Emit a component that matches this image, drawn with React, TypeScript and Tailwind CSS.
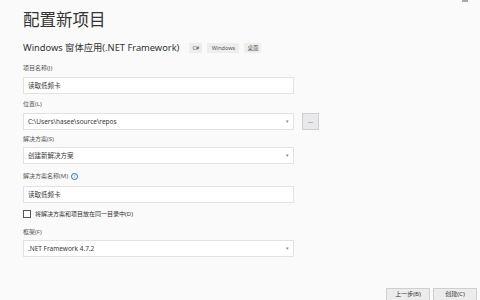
import React from "react";

const font = { fontFamily: '"Noto Sans", "Noto Sans CJK SC", sans-serif' };

function Label({ children }: { children: React.ReactNode }) {
  return <div className="h-[10px] text-[6px] leading-[10px] text-[#555]">{children}</div>;
}

function Field({ value, dropdown }: { value: string; dropdown?: boolean }) {
  return (
    <div className="flex h-[17px] w-[271px] items-center justify-between border border-[#e2e2e2] bg-white pl-[4px] pr-[4px] text-[6.5px] text-[#3a3a3a]">
      <span>{value}</span>
      {dropdown && <span className="text-[5px] text-[#888]">▾</span>}
    </div>
  );
}

function Tag({ w, children }: { w: string; children: React.ReactNode }) {
  return (
    <span className={`flex h-[10px] items-center justify-center rounded-[1px] bg-[#eeeeee] text-[5.5px] text-[#555] ${w}`}>{children}</span>
  );
}

export default function App() {
  return (
    <div className="relative h-[300px] w-[480px] overflow-hidden bg-[#fafafa]" style={font}>
      <div className="absolute right-[12px] top-0 h-[2px] w-[6px] bg-[#aaa]" />
      <div className="flex flex-col px-[23px] pt-[8px]">
        <div className="h-[24px] text-[16.5px] leading-[24px] text-[#333]">配置新项目</div>
        <div className="mt-[9px] flex h-[14px] items-center gap-[5px]">
          <span className="mr-[5px] text-[9.3px] leading-[14px] text-[#333]">Windows 窗体应用(.NET Framework)</span>
          <Tag w="w-[13px]">C#</Tag>
          <Tag w="w-[32px]">Windows</Tag>
          <Tag w="w-[17px]">桌面</Tag>
        </div>
        <div className="mt-[8px]">
          <Label>项目名称(J)</Label>
        </div>
        <div className="mt-[4px]">
          <Field value="读取低频卡" />
        </div>
        <div className="mt-[5px]">
          <Label>位置(L)</Label>
        </div>
        <div className="mt-[4px] flex items-center gap-[8px]">
          <Field value="C:\Users\hasee\source\repos" dropdown />
          <div className="flex h-[17px] w-[17px] items-center justify-center border border-[#cfcfcf] bg-[#e9e9ec] text-[6px] text-[#444]">...</div>
        </div>
        <div className="mt-[4px]">
          <Label>解决方案(S)</Label>
        </div>
        <div className="mt-[3px]">
          <Field value="创建新解决方案" dropdown />
        </div>
        <div className="mt-[7px] flex items-center gap-[3px]">
          <Label>解决方案名称(M)</Label>
          <span className="flex h-[7px] w-[7px] items-center justify-center rounded-full border border-[#1e73c8] text-[4.5px] leading-none text-[#1e73c8]">i</span>
        </div>
        <div className="mt-[5px]">
          <Field value="读取低频卡" />
        </div>
        <div className="mt-[6px] flex items-center gap-[4px]">
          <div className="h-[8px] w-[8px] border border-[#555] bg-white" />
          <span className="text-[6px] leading-[10px] text-[#333]">将解决方案和项目放在同一目录中(D)</span>
        </div>
        <div className="mt-[8px]">
          <Label>框架(F)</Label>
        </div>
        <div className="mt-[3px]">
          <Field value=".NET Framework 4.7.2" dropdown />
        </div>
      </div>
      <div className="absolute bottom-[-4px] right-[3px] flex gap-[3px]">
        <div className="flex h-[16px] w-[44px] flex-col items-center border border-[#cfcfcf] bg-[#ececec] pt-[1px] text-[6px] leading-[8px] text-[#333]">
          上一步(B)
        </div>
        <div className="flex h-[16px] w-[44px] flex-col items-center border border-[#cfcfcf] bg-[#ececec] pt-[1px] text-[6px] leading-[8px] text-[#333]">
          创建(C)
        </div>
      </div>
    </div>
  );
}
